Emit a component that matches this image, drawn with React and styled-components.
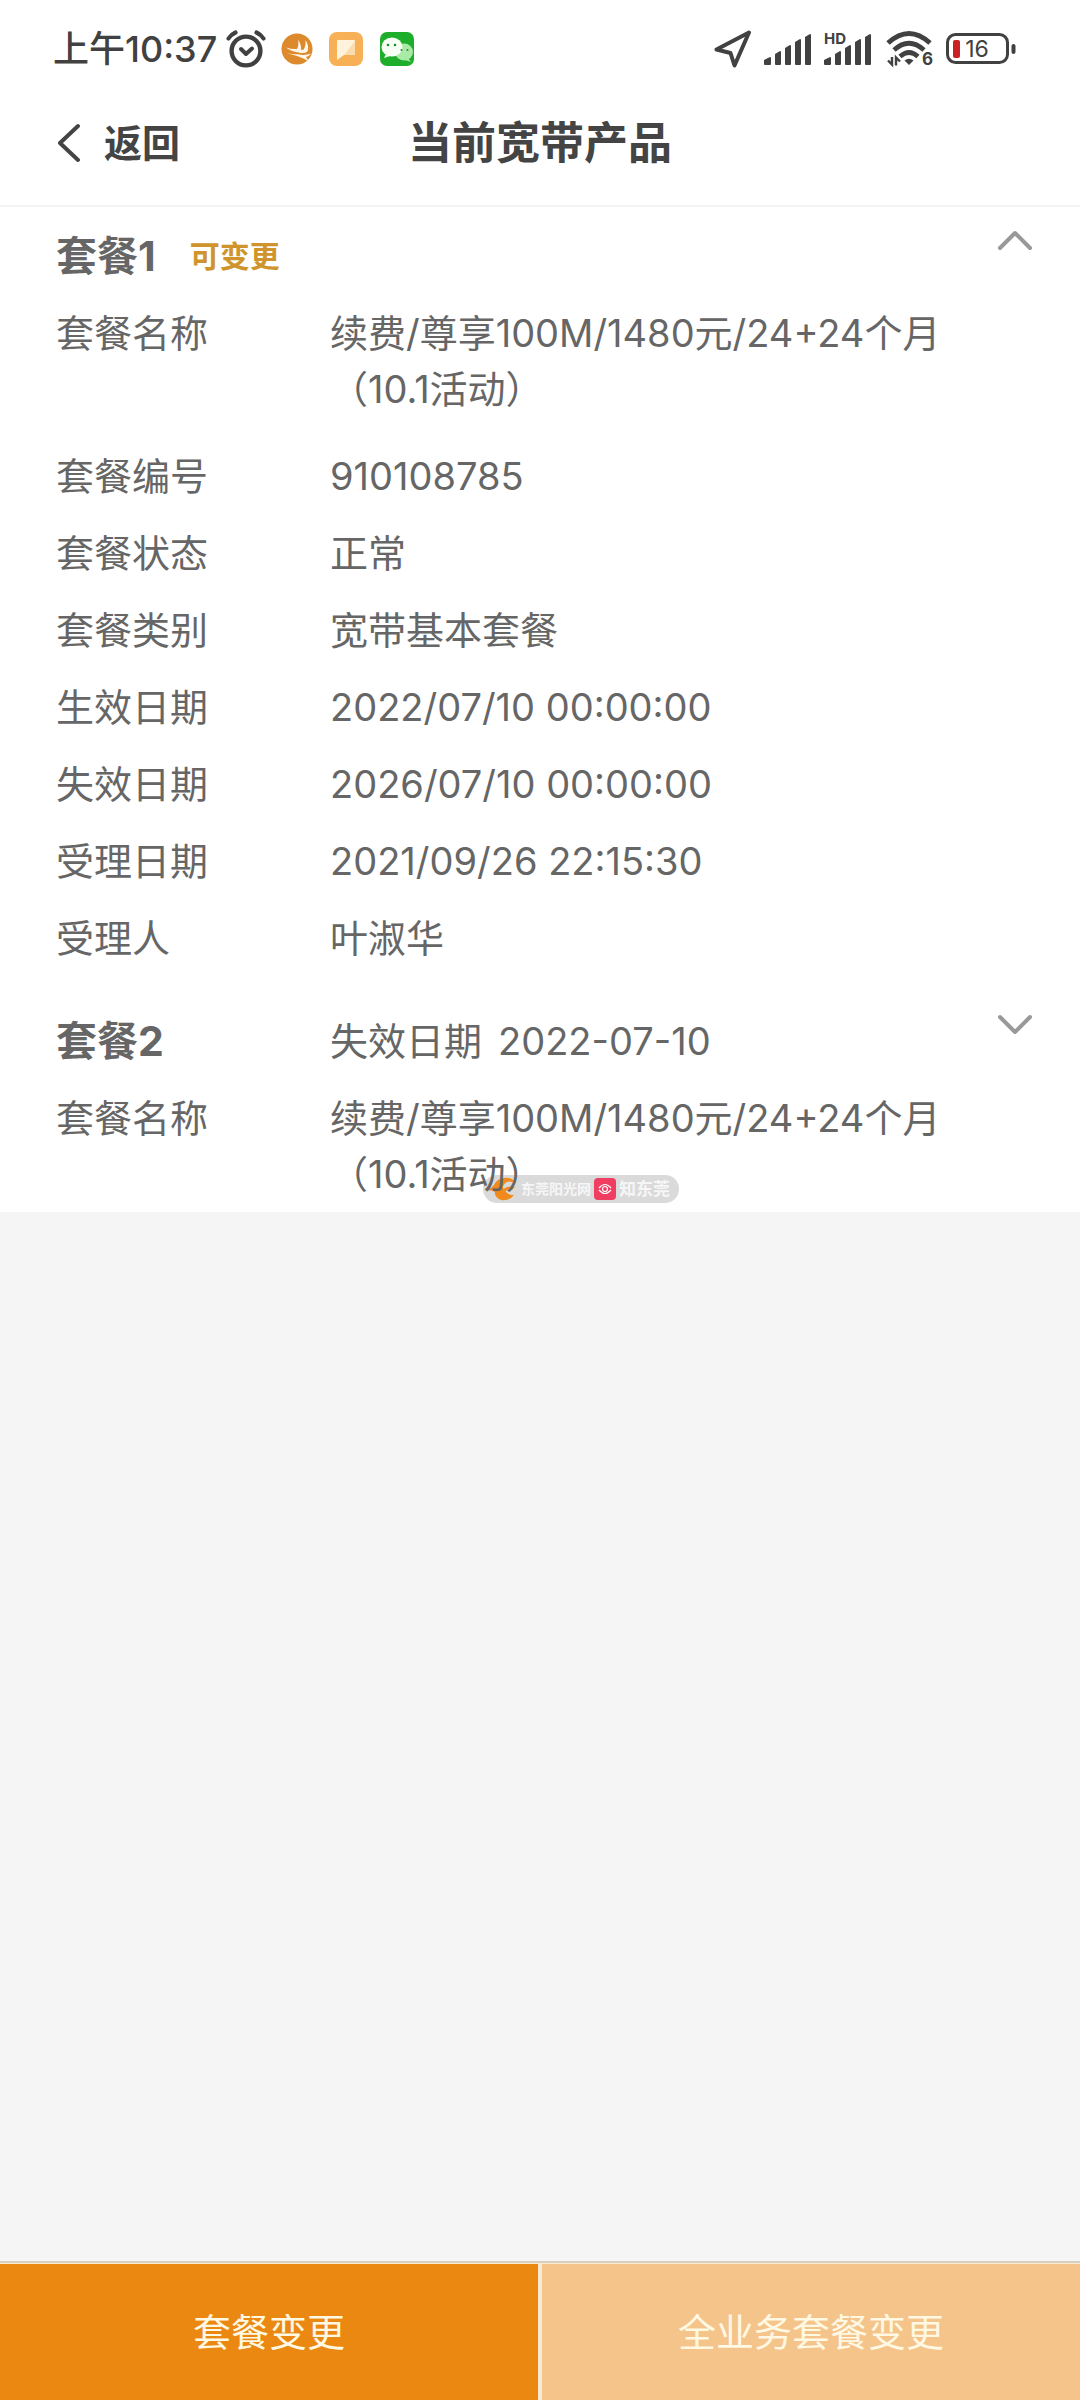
import React, { useState } from 'react';
import styled, { createGlobalStyle } from 'styled-components';

const GlobalStyle = createGlobalStyle`
  * {
    box-sizing: border-box;
  }

  body {
    margin: 0;
    background: #f5f5f5;
    font-family: Inter, 'Noto Sans CJK SC', sans-serif;
    color: #666;
  }

  button {
    font-family: inherit;
    cursor: pointer;
  }
`;

const Page = styled.div`
  min-height: 100vh;
  display: flex;
  flex-direction: column;
`;

const StatusBar = styled.div`
  display: flex;
  align-items: center;
  justify-content: space-between;
  height: 98px;
  padding: 0 64px 0 53px;
  background: #fff;
  color: #414141;
`;

const StatusGroup = styled.div`
  display: flex;
  align-items: center;
  gap: ${props => props.$gap}px;
`;

const Clock = styled.span`
  font-size: 36px;
  font-weight: 500;
  line-height: 48px;
`;

const Header = styled.header`
  display: grid;
  grid-template-columns: 1fr auto 1fr;
  align-items: center;
  height: 109px;
  padding: 0 56px 18px;
  background: #fff;
  border-bottom: 2px solid #f3f3f3;
  color: #444;
`;

const BackButton = styled.button`
  display: flex;
  align-items: center;
  gap: 24px;
  padding: 0;
  border: none;
  background: none;
  color: inherit;
  font-size: 38px;
  font-weight: 700;
  line-height: 56px;
`;

const Title = styled.h1`
  margin: 0;
  font-size: 44px;
  font-weight: 700;
  line-height: 56px;
`;

const Panel = styled.main`
  display: flex;
  flex-direction: column;
  gap: 47px;
  padding: 21px 47px 0 56px;
  background: #fff;
`;

const Package = styled.section`
  display: flex;
  flex-direction: column;
  gap: 21px;
`;

const PackageHead = styled.div`
  display: flex;
  line-height: 56px;
`;

const PackageName = styled.h2`
  margin: 0;
  font-size: 41px;
  font-weight: 700;
  line-height: 56px;
  min-width: ${props => (props.$column ? '274px' : '0')};
`;

const Tag = styled.span`
  margin-left: 34px;
  color: #cf952c;
  font-size: 30px;
  font-weight: 700;
`;

const Expiry = styled.span`
  display: flex;
  gap: 16px;
  font-size: 38px;
`;

const Toggle = styled.button`
  align-self: flex-start;
  display: flex;
  margin-left: auto;
  padding: 0;
  border: none;
  background: none;
  color: #999;
`;

const Fields = styled.dl`
  display: flex;
  flex-direction: column;
  gap: 21px;
  margin: 0;
`;

const Field = styled.div`
  display: grid;
  grid-template-columns: 274px 1fr;
  padding-bottom: ${props => (props.$tall ? '10px' : '0')};
  font-size: 38px;
  line-height: 56px;
`;

const Label = styled.dt`
  margin: 0;
`;

const Value = styled.dd`
  position: relative;
  isolation: isolate;
  max-width: 640px;
  margin: 0;
`;

const Note = styled.span`
  display: inline-block;
`;

const Watermark = styled.div`
  position: absolute;
  z-index: -1;
  left: 153px;
  bottom: -1px;
  display: flex;
  align-items: center;
  gap: 3px;
  height: 28px;
  padding: 0 9px 0 4px;
  border-radius: 14px;
  background: #dadada;
  color: #f6f6f6;
  white-space: nowrap;
`;

const WatermarkText = styled.span`
  font-size: ${props => props.$size}px;
  font-weight: 700;
  line-height: 20px;
`;

const Footer = styled.footer`
  display: grid;
  grid-template-columns: 1fr 1fr;
  gap: 4px;
  height: 139px;
  margin-top: auto;
  border-top: 2px solid #d6cfbf;
  padding-top: 1px;
  background: #fbead2;
`;

const ActionButton = styled.button`
  border: none;
  padding: 0;
  background: ${props => (props.$primary ? '#ea8812' : '#f5c48b')};
  color: #fff8e2;
  font-size: 38px;
  line-height: 56px;
`;

const AlarmIcon = () => (
  <svg width="40" height="38" viewBox="0 0 40 38" fill="none" stroke="#414141" strokeLinecap="round">
    <circle cx="20" cy="21" r="14.4" strokeWidth="4.4" />
    <path d="M2.500 8.500Q5 4.500 9.500 2.500M37.500 8.500Q35 4.500 30.500 2.500" strokeWidth="4.200" />
    <path d="M15 19l5 5 6-5.500" strokeWidth="4" strokeLinejoin="round" />
  </svg>
);

const BirdAppIcon = () => (
  <svg width="32" height="32" viewBox="0 0 32 32">
    <circle cx="16" cy="16" r="15.500" fill="#dc8a2c" />
    <path d="M5 14.500q6 2 11 1.500 2-3 1-9 3.500 4 3 9.500 1 .5 2.500.2Q25 13 24.500 7q4 6 2 11.500-3 2.500-9 1Q10 18.500 5 14.500z" fill="#fff6e6" />
    <path d="M6 20.500q6 1 11 .8 7 1.500 13-.8-2 3-5 3.500l3 4.500Q18 22.500 6 20.500z" fill="#fff6e6" />
  </svg>
);

const NoteAppIcon = () => (
  <svg width="36" height="36" viewBox="0 0 36 36">
    <rect x="1" y="1" width="34" height="34" rx="8" fill="#f7b055" />
    <path d="M9 10q0-1 1-1h16q1 0 1 1v13q0 1-1 1H16l-7 5z" fill="#fff3dd" />
    <path d="M27 10v13q0 1-1 1H16z" fill="#fbdcae" />
  </svg>
);

const WechatIcon = () => (
  <svg width="36" height="36" viewBox="0 0 36 36">
    <rect x="1" y="1" width="34" height="34" rx="7" fill="#1fae2b" />
    <ellipse cx="25" cy="21" rx="9" ry="8.500" fill="#a9eaa6" />
    <path d="M29 27l3 4-6-2z" fill="#a9eaa6" />
    <ellipse cx="13" cy="16" rx="10.500" ry="9.500" fill="#f7fff5" />
    <path d="M7 23l-2 4 6-2z" fill="#f7fff5" />
    <g fill="#1b8a2b">
      <circle cx="9" cy="14" r="1.300" />
      <circle cx="16" cy="14" r="1.300" />
      <circle cx="22.500" cy="19" r="1" />
      <circle cx="28.500" cy="19" r="1" />
    </g>
  </svg>
);

const LocationIcon = () => (
  <svg width="38" height="38" viewBox="0 0 38 38" fill="none" stroke="#414141" strokeWidth="4" strokeLinejoin="round">
    <path d="M35 2.500L2.500 19.500l14 3.500 4 12.500z" />
  </svg>
);

const SignalIcon = ({ hd }) => (
  <svg width={hd ? 50 : 48} height="42" viewBox={hd ? '0 -4 50 42' : '0 -4 48 42'} fill="#414141">
    <path d="M0 28l6-3q1 0 1 1v6q0 1-1 1H1q-1 0-1-1z" />
    <path d="M11 22l5-3q1 0 1 1v12q0 1-1 1h-4q-1 0-1-1z" />
    <path d="M21 16l5-3q1 0 1 1v18q0 1-1 1h-4q-1 0-1-1z" />
    <path d="M31 10l5-3q1 0 1 1v24q0 1-1 1h-4q-1 0-1-1z" />
    <path d="M41 5l5-3q1 0 1 1v29q0 1-1 1h-4q-1 0-1-1z" />
    {hd && (
      <text x="0" y="12" fontSize="15" fontWeight="700" fontFamily="Inter">HD</text>
    )}
  </svg>
);

const WifiIcon = () => (
  <svg width="48" height="38" viewBox="0 0 48 38" fill="none" stroke="#414141">
    <path d="M2 13q21-19 42 0" strokeWidth="5" />
    <path d="M8 20q15-13.500 30 0" strokeWidth="4.800" />
    <path d="M14 26.500q9-8 18 0" strokeWidth="4.600" />
    <path d="M23 35l-4.500-4.500q4.500-3.500 9 0z" fill="#414141" stroke="none" />
    <path d="M6 27v7.500l-4-4M10 35.500v-8l4 4" strokeWidth="2.400" />
    <text x="36" y="35" fontSize="17" fontWeight="700" fontFamily="Inter" fill="#414141" stroke="none">6</text>
  </svg>
);

const BatteryIcon = () => (
  <svg width="70" height="32" viewBox="0 0 70 32">
    <rect x="1.500" y="1.500" width="60" height="28" rx="8" fill="none" stroke="#414141" strokeWidth="3" />
    <rect x="7" y="7" width="7" height="18" rx="2" fill="#cc2027" />
    <rect x="65.500" y="11" width="4" height="10" rx="2" fill="#414141" />
    <text x="31" y="24" fontSize="23" textAnchor="middle" fontFamily="Inter" fill="#414141">16</text>
  </svg>
);

const BackIcon = () => (
  <svg width="24" height="40" viewBox="0 0 24 40" fill="none" stroke="#444" strokeWidth="4" strokeLinecap="round" strokeLinejoin="round">
    <path d="M22 3L4 20l18 17" />
  </svg>
);

const ChevronIcon = ({ open }) => (
  <svg width="36" height="24" viewBox="0 0 36 24" fill="none" stroke="currentColor" strokeWidth="4" strokeLinecap="round" strokeLinejoin="round">
    <path d={open ? 'M3 20L18 5l15 15' : 'M3 4l15 15L33 4'} />
  </svg>
);

const SunshineIcon = () => (
  <svg width="31" height="26" viewBox="0 0 32 26">
    <path d="M0 14Q5 12 7 9q4-8 14-7.500 7 .5 8 6Q24 4 20 6q-5 3-3 7 5-4 12-2-2 1-3 3-4-1-7 1 3 5 9 4-4 6-12 5.500Q8 23 8 16q-3-2-8-2z" fill="#f08a1d" />
  </svg>
);

const EyeIcon = () => (
  <svg width="22" height="22" viewBox="0 0 22 22" fill="none">
    <rect width="22" height="22" rx="4" fill="#f03e62" />
    <path d="M5 10q6-7 12 0M5 12q6 7 12 0" stroke="#fff" strokeWidth="1.200" />
    <circle cx="11" cy="11" r="2.500" stroke="#fff" strokeWidth="1.200" />
  </svg>
);

const packageName = '续费/尊享100M/1480元/24+24个月';
const packageNote = '（10.1活动）';

const firstFields = [
  { label: '套餐名称', value: packageName, note: packageNote },
  { label: '套餐编号', value: '910108785' },
  { label: '套餐状态', value: '正常' },
  { label: '套餐类别', value: '宽带基本套餐' },
  { label: '生效日期', value: '2022/07/10 00:00:00' },
  { label: '失效日期', value: '2026/07/10 00:00:00' },
  { label: '受理日期', value: '2021/09/26 22:15:30' },
  { label: '受理人', value: '叶淑华' }
];

const App = () => {
  const [firstOpen, setFirstOpen] = useState(true);
  const [secondOpen, setSecondOpen] = useState(false);

  return (
    <Page>
      <GlobalStyle />

      <StatusBar>
        <StatusGroup $gap={15}>
          <StatusGroup $gap={9}>
            <Clock>上午10:37</Clock>
            <AlarmIcon />
          </StatusGroup>
          <BirdAppIcon />
          <NoteAppIcon />
          <WechatIcon />
        </StatusGroup>
        <StatusGroup $gap={12}>
          <LocationIcon />
          <SignalIcon />
          <SignalIcon hd />
          <WifiIcon />
          <BatteryIcon />
        </StatusGroup>
      </StatusBar>

      <Header>
        <BackButton>
          <BackIcon />
          返回
        </BackButton>
        <Title>当前宽带产品</Title>
      </Header>

      <Panel>
        <Package>
          <PackageHead>
            <PackageName>套餐1</PackageName>
            <Tag>可变更</Tag>
            <Toggle
              aria-label="套餐1"
              aria-expanded={firstOpen}
              onClick={() => setFirstOpen(!firstOpen)}
            >
              <ChevronIcon open={firstOpen} />
            </Toggle>
          </PackageHead>
          <Fields>
            {(firstOpen ? firstFields : firstFields.slice(0, 1)).map(field => (
              <Field key={field.label} $tall={Boolean(field.note)}>
                <Label>{field.label}</Label>
                <Value>
                  {field.value}
                  {field.note && <Note>{field.note}</Note>}
                </Value>
              </Field>
            ))}
          </Fields>
        </Package>

        <Package>
          <PackageHead>
            <PackageName $column>套餐2</PackageName>
            <Expiry>
              <span>失效日期</span>
              <span>2022-07-10</span>
            </Expiry>
            <Toggle
              aria-label="套餐2"
              aria-expanded={secondOpen}
              onClick={() => setSecondOpen(!secondOpen)}
            >
              <ChevronIcon open={secondOpen} />
            </Toggle>
          </PackageHead>
          <Fields>
            <Field $tall>
              <Label>套餐名称</Label>
              <Value>
                {packageName}
                <Note>{packageNote}</Note>
                <Watermark>
                  <SunshineIcon />
                  <WatermarkText $size={14}>东莞阳光网</WatermarkText>
                  <EyeIcon />
                  <WatermarkText $size={17}>知东莞</WatermarkText>
                </Watermark>
              </Value>
            </Field>
          </Fields>
        </Package>
      </Panel>

      <Footer>
        <ActionButton $primary>套餐变更</ActionButton>
        <ActionButton>全业务套餐变更</ActionButton>
      </Footer>
    </Page>
  );
};

export default App;
